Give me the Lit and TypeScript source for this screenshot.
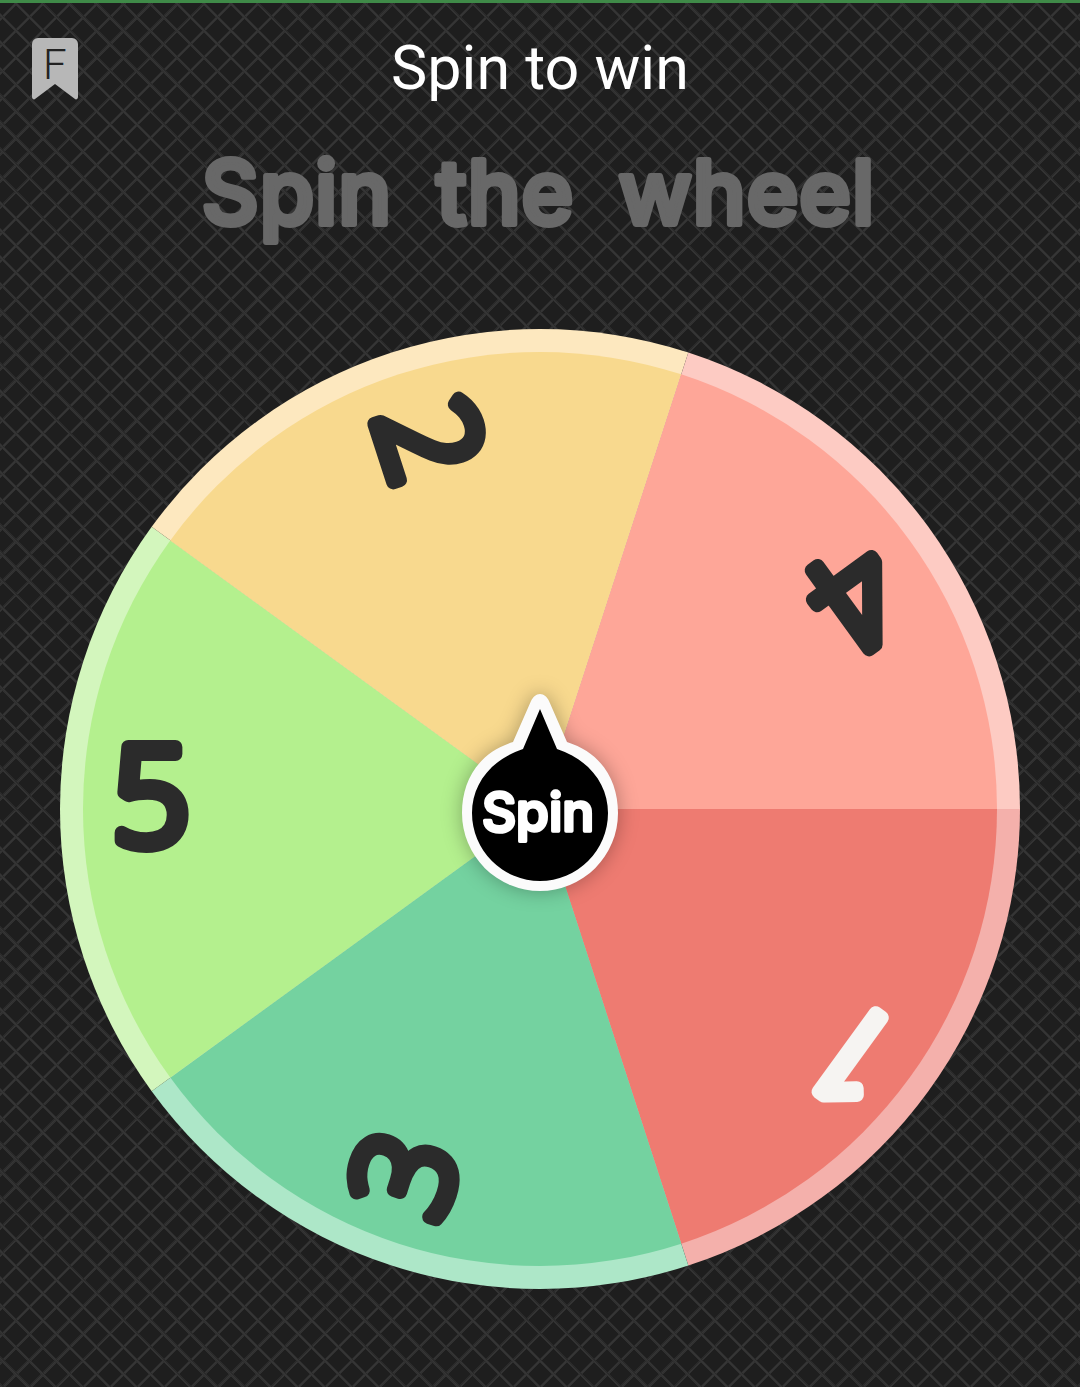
import { LitElement, html, svg, css } from "lit";
import { customElement, property } from "lit/decorators.js";

interface Slice {
  label: string;
  fill: string;
  rim: string;
  ink: string;
  start: number;
  // nudges so each digit lands where the reference has it
  radius: number;
  angle: number;
}

const SLICES: Slice[] = [
  { label: "1", fill: "#ee7b71", rim: "#f4b0ab", ink: "#f6f4f2", start: 0, radius: 399, angle: 38.3 },
  { label: "3", fill: "#74d2a0", rim: "#ade7c8", ink: "#2b2b2b", start: 72, radius: 390, angle: 110.3 },
  { label: "5", fill: "#b4f08e", rim: "#d3f6bd", ink: "#2b2b2b", start: 144, radius: 389, angle: 181.7 },
  { label: "2", fill: "#f8d98e", rim: "#fde8bf", ink: "#2b2b2b", start: 216, radius: 386, angle: 253.4 },
  { label: "4", fill: "#fea698", rim: "#fdcbc3", ink: "#2b2b2b", start: 288, radius: 381, angle: 326.2 },
];

const SWEEP = 72;
const SIZE = 960;
const MID = SIZE / 2;

function wedge(start: number, end: number, r: number) {
  const a = (start * Math.PI) / 180;
  const b = (end * Math.PI) / 180;
  const x1 = MID + r * Math.cos(a);
  const y1 = MID + r * Math.sin(a);
  const x2 = MID + r * Math.cos(b);
  const y2 = MID + r * Math.sin(b);
  return `M${MID} ${MID}L${x1} ${y1}A${r} ${r} 0 0 1 ${x2} ${y2}Z`;
}

@customElement("spin-wheel")
export class SpinWheel extends LitElement {
  @property({ type: Array })
  slices: Slice[] = SLICES;

  static override styles = css`
    :host {
      display: block;
      width: 960px;
      height: 960px;
    }
    svg {
      display: block;
      overflow: visible;
    }
    .digit {
      font-family: "Noto Sans", sans-serif;
      font-size: 136px;
      font-weight: 300;
      text-anchor: middle;
      stroke-width: 14px;
      stroke-linejoin: round;
      stroke-linecap: round;
    }
    .hubText {
      font-family: Inter, sans-serif;
      font-size: 53px;
      font-weight: 500;
      text-anchor: middle;
      fill: #fff;
      stroke: #fff;
      stroke-width: 3.5px;
      stroke-linejoin: round;
      stroke-linecap: round;
    }
    .hubShadow {
      filter: blur(10px);
      fill: rgba(0, 0, 0, 0.3);
    }
  `;

  private renderSlice(s: Slice) {
    const rad = (s.angle * Math.PI) / 180;
    const x = MID + s.radius * Math.cos(rad);
    const y = MID + s.radius * Math.sin(rad);
    return svg`
      <path d=${wedge(s.start, s.start + SWEEP, 480)} fill=${s.rim}></path>
      <path d=${wedge(s.start, s.start + SWEEP, 457)} fill=${s.fill}></path>
      <text class="digit" fill=${s.ink} stroke=${s.ink} transform="translate(${x} ${y}) rotate(${s.start + SWEEP / 2 - 180})" y="48">${s.label}</text>
    `;
  }

  override render() {
    const hub = "M480 365 C484 365 487 368 489 372 L507 413 C542 424 558 452 558 484 A78 78 0 1 1 402 484 C402 452 418 424 453 413 L471 372 C473 368 476 365 480 365Z";
    return html`<svg width=${SIZE} height=${SIZE} viewBox="0 0 ${SIZE} ${SIZE}">
      ${this.slices.map((s) => this.renderSlice(s))}
      <path class="hubShadow" d=${hub}></path>
      <path d=${hub} fill="#fbfbfb"></path>
      <path d="M480 380 L497 420 C530 431 548 456 548 484 A68 68 0 1 1 412 484 C412 456 430 431 463 420 Z" fill="#000"></path>
      <text class="hubText" x="478" y="502">Spin</text>
    </svg>`;
  }
}

@customElement("app-root")
export class AppRoot extends LitElement {
  static override styles = css`
    :host {
      display: block;
      width: 1080px;
      height: 1387px;
      overflow: hidden;
      background-color: #1e1e1e;
      background-image: repeating-linear-gradient(
          45deg,
          #303030 0 1px,
          #353535 1px 2px,
          #2a2a2a 2px 3px,
          transparent 3px 19px
        ),
        repeating-linear-gradient(
          -45deg,
          #303030 0 1px,
          #353535 1px 2px,
          #2a2a2a 2px 3px,
          transparent 3px 19px
        );
    }
    .statusLine {
      height: 3px;
      background: #3f8a48;
    }
    .header {
      display: grid;
      grid-template-columns: 110px 1fr 110px;
      align-items: start;
      height: 100px;
    }
    .bookmark {
      display: block;
      margin: 34px 0 0 32px;
    }
    .bookmark text {
      font-family: Roboto, sans-serif;
      font-size: 42px;
      font-weight: 300;
      fill: #222;
    }
    .title {
      margin: 0;
      padding-top: 29px;
      text-align: center;
      font-family: Roboto, sans-serif;
      font-size: 61px;
      font-weight: 400;
      line-height: 72px;
      color: #fff;
    }
    .headline {
      display: block;
      margin: 29px auto 0;
      overflow: visible;
    }
    .headline text {
      font-family: Inter, sans-serif;
      font-size: 88px;
      font-weight: 500;
      letter-spacing: 1px;
      word-spacing: 20px;
      text-anchor: middle;
      fill: #686868;
      stroke: #686868;
      stroke-width: 6px;
      stroke-linejoin: round;
      stroke-linecap: round;
    }
    spin-wheel {
      margin: 79px 0 0 60px;
    }
  `;

  override render() {
    return html`
      <div class="statusLine"></div>
      <div class="header">
        <svg class="bookmark" width="46" height="64" viewBox="0 0 46 64">
          <path
            d="M6 1H40a6 6 0 0 1 6 6V60c0 2-2 3-3 2L23 47 3 62c-1 1-3 0-3-2V7a6 6 0 0 1 6-6Z"
            fill="#b7b7b7"
          ></path>
          <text x="11" y="42">F</text>
        </svg>
        <h1 class="title">Spin to win</h1>
        <div></div>
      </div>
      <svg class="headline" width="720" height="118" viewBox="0 0 720 118">
        <text x="358.5" y="92">Spin the wheel</text>
      </svg>
      <spin-wheel></spin-wheel>
    `;
  }
}
